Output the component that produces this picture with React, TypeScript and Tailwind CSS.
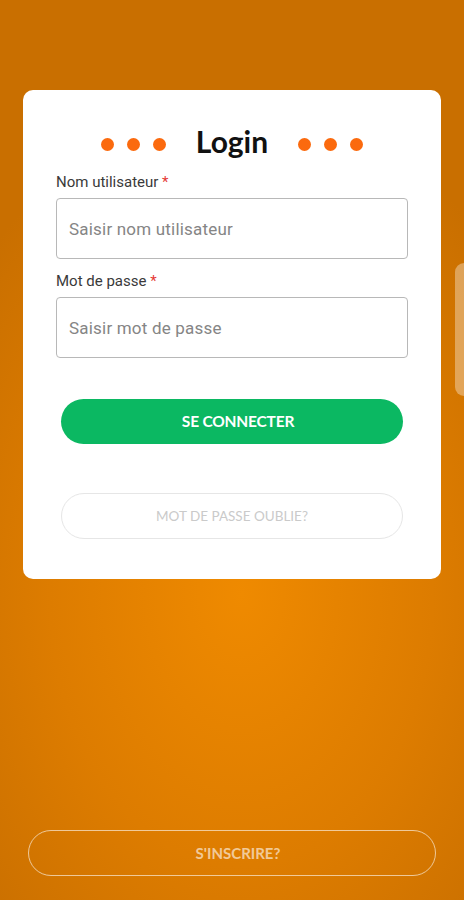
import React from "react";

function Dots() {
  return (
    <div className="mt-[6px] flex items-center gap-[13px]">
      <span className="h-[13px] w-[13px] rounded-full bg-[#fb6a0e]" />
      <span className="h-[13px] w-[13px] rounded-full bg-[#fb6a0e]" />
      <span className="h-[13px] w-[13px] rounded-full bg-[#fb6a0e]" />
    </div>
  );
}

function Field({ label, placeholder, type = "text" }: { label: string; placeholder: string; type?: string }) {
  return (
    <div className="flex flex-col">
      <label className="text-[15px] leading-[20px] text-[#3a3a3a] font-['Roboto',sans-serif]">
        {label} <span className="text-[#e53935]">*</span>
      </label>
      <input
        type={type}
        placeholder={placeholder}
        className="mt-[6px] h-[61px] w-full rounded-[4px] border border-[#b8b8b8] bg-white px-[12px] text-[17px] tracking-[0.2px] text-[#333] placeholder:text-[#858585] outline-none font-['Roboto',sans-serif]"
      />
    </div>
  );
}

export default function App() {
  return (
    <div className="relative flex min-h-[900px] w-full flex-col overflow-hidden bg-[radial-gradient(ellipse_75%_55%_at_52%_66%,#ef8a00_0%,#dd7c00_55%,#c96f00_100%)] font-['Lato',sans-serif]">
      {/* Login card */}
      <div className="mx-[23px] mt-[90px] rounded-[10px] bg-white px-[33px] pb-[40px] pt-[33px]">
        <div className="flex items-center justify-center gap-[30px]">
          <Dots />
          <h1 className="text-[30px] font-bold leading-[36px] text-[#111]">Login</h1>
          <Dots />
        </div>

        <div className="mt-[13px] flex flex-col gap-[12px]">
          <Field label="Nom utilisateur" placeholder="Saisir nom utilisateur" />
          <Field label="Mot de passe" placeholder="Saisir mot de passe" type="password" />
        </div>

        <div className="mx-[5px] mt-[41px] flex flex-col gap-[49px]">
          <button className="h-[45px] w-full rounded-full bg-[#0bb862] pl-[12px] text-[15.5px] font-bold tracking-[-0.2px] text-white">
            SE CONNECTER
          </button>
          <button className="h-[46px] w-full rounded-full border border-[#e6e6e6] bg-white text-[13.5px] text-[#cacaca]">
            MOT DE PASSE OUBLIE?
          </button>
        </div>
      </div>

      <div className="flex-1" />

      <div className="mx-[28px] mb-[24px]">
        <button className="h-[46px] w-full rounded-full border-[1.5px] border-white/60 pl-[12px] text-[15px] font-bold text-white/60">
          S'INSCRIRE?
        </button>
      </div>

      {/* side drawer handle */}
      <div className="absolute right-0 top-[263px] h-[133px] w-[9px] rounded-l-[10px] bg-white/35" />
    </div>
  );
}
